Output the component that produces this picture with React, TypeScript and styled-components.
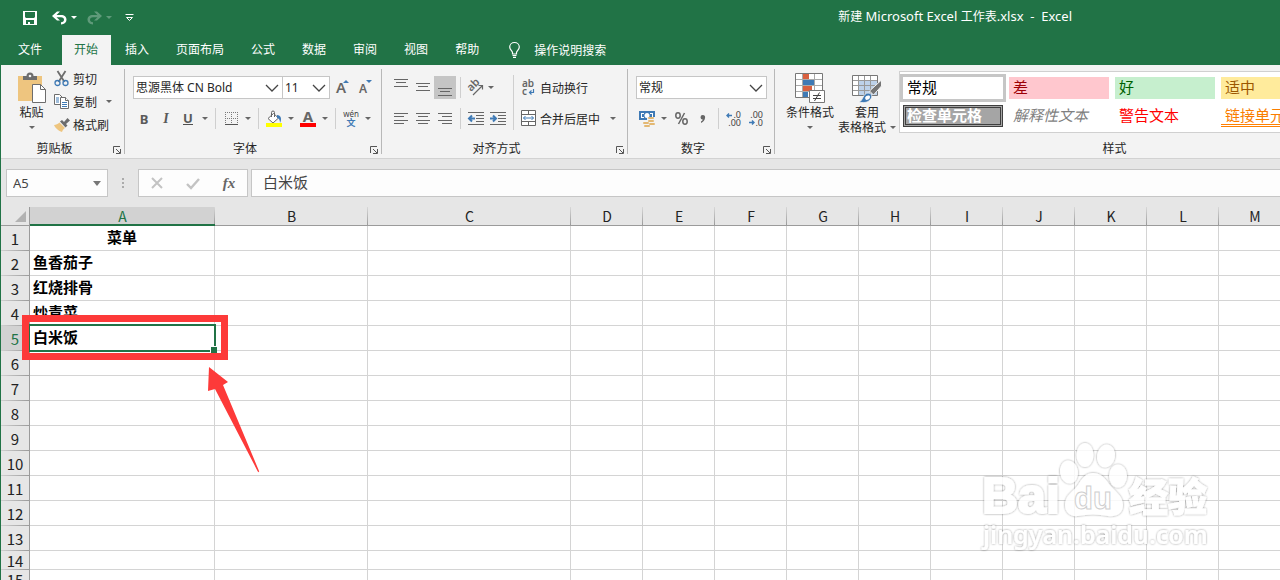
import React from "react";
import styled, { createGlobalStyle, css } from "styled-components";

const green = "#217346";
const line = "#c6c6c6";
const ink = "#666666";
const blue = "#3f7ab5";
const marker = "#fd3a39";

const GlobalStyle = createGlobalStyle`
  * { box-sizing: border-box; }
  body { margin: 0; overflow: hidden; }
  body, button, input, select {
    font-family: "Noto Sans", "Noto Sans CJK SC", sans-serif;
    font-size: 12px;
    color: #262626;
  }
  button { border: 0; padding: 0; background: none; cursor: pointer; }
  svg { display: block; flex: none; overflow: visible; }
`;

const Window = styled.div`
  height: 100vh;
  display: flex;
  flex-direction: column;
  overflow: hidden;
  border-left: 1px solid ${green};
  background: #fff;
`;

/* ---------- title bar and tabs ---------- */

const TitleBar = styled.header`
  flex: none;
  display: flex;
  align-items: center;
  height: 35px;
  padding: 0 208px 0 22px;
  background: ${green};
  color: #fff;
`;

const QuickAccess = styled.div`
  display: flex;
  align-items: center;
`;

const QuickButton = styled.button<{ $dim?: boolean; $gap?: number }>`
  display: flex;
  align-items: center;
  gap: 4px;
  margin-right: ${(p) => p.$gap ?? 0}px;
  color: #fff;
  opacity: ${(p) => (p.$dim ? 0.28 : 1)};
`;

const Title = styled.h1`
  margin: 0 0 0 auto;
  padding-bottom: 2px;
  font-size: 12px;
  line-height: 16px;
  font-weight: 400;
  white-space: pre;
`;

const Latin = styled.span`
  font-size: 13px;
`;

const TabBar = styled.nav`
  flex: none;
  display: flex;
  gap: 2px;
  height: 30px;
  padding-left: 5px;
  background: ${green};
`;

const Tab = styled.button<{ $active?: boolean; $file?: boolean }>`
  padding: 0 13px 3px 12px;
  margin-right: ${(p) => (p.$file ? 5 : 0)}px;
  white-space: nowrap;
  color: ${(p) => (p.$active ? green : "#fff")};
  background: ${(p) => (p.$active ? "#f3f3f3" : "transparent")};
`;

const TellMe = styled.button`
  display: flex;
  align-items: center;
  gap: 14px;
  margin-left: 15px;
  color: #fff;
  white-space: nowrap;
`;

/* ---------- ribbon ---------- */

const Ribbon = styled.div`
  flex: none;
  display: flex;
  padding: 4px 0;
  background: #f3f3f3;
  border-bottom: 1px solid #d2d2d2;
`;

const GroupBox = styled.section<{ $width: number; $last?: boolean }>`
  flex: ${(p) => (p.$last ? 1 : 0)} 0 ${(p) => p.$width}px;
  display: flex;
  flex-direction: column;
  border-right: ${(p) => (p.$last ? 0 : 1)}px solid #b8b8b8;
`;

const GroupBody = styled.div`
  display: flex;
  height: 73px;
  padding-left: 8px;
`;

const GroupFooter = styled.footer`
  display: flex;
  align-items: center;
  height: 12px;
  padding-right: 3px;
  line-height: 12px;
`;

const GroupLabel = styled.span`
  flex: 1;
  padding-top: 2px;
  text-align: center;
`;

const Launcher = styled.button`
  margin: 4px 0 0 5px;
`;

const Rows = styled.div`
  display: flex;
  flex-direction: column;
  gap: 8px;
  padding-top: 7px;
`;

const Row = styled.div`
  display: flex;
  align-items: center;
  height: 23px;
`;

const Tool = styled.button<{ $width?: number; $on?: boolean }>`
  display: flex;
  align-items: center;
  justify-content: center;
  width: ${(p) => p.$width ?? 22}px;
  height: 23px;
  background: ${(p) => (p.$on ? "#c5c5c5" : "transparent")};
`;

const Letter = styled.span<{ $kind: "bold" | "italic" | "underline" }>`
  font-size: 13px;
  line-height: 14px;
  font-weight: 700;
  color: #5a5a5a;
  ${(p) => p.$kind === "italic" && css`font-family: "Liberation Serif", serif; font-style: italic; font-size: 14px;`}
  ${(p) => p.$kind === "underline" && css`border-bottom: 1px solid #505050; line-height: 12px;`}
`;

const Divider = styled.span<{ $tall?: boolean }>`
  flex: none;
  width: 1px;
  height: ${(p) => (p.$tall ? 55 : 21)}px;
  margin: ${(p) => (p.$tall ? "6px 6px 0 4px" : "0 4px")};
  background: #cfcfcf;
`;

const LabelTool = styled.button<{ $gap?: number }>`
  display: flex;
  align-items: center;
  gap: ${(p) => p.$gap ?? 4}px;
  height: 23px;
  white-space: nowrap;
`;

const SmallStack = styled.div`
  display: flex;
  flex-direction: column;
`;

const SmallRow = styled.div`
  display: flex;
  align-items: center;
  height: 23px;
  padding-bottom: 4px;
`;

const BigTool = styled.button<{ $width: number }>`
  display: flex;
  flex-direction: column;
  align-items: center;
  align-self: flex-start;
  width: ${(p) => p.$width}px;
  padding-top: 4px;
  line-height: 15px;
  white-space: nowrap;
`;

const BigIcon = styled.span`
  display: block;
  height: 32px;
`;

const BigLine = styled.span`
  display: flex;
  align-items: center;
  gap: 4px;
  height: 15px;
`;

const Field = styled.label<{ $width: number; $joined?: boolean }>`
  position: relative;
  width: ${(p) => p.$width}px;
  margin-left: ${(p) => (p.$joined ? -1 : 0)}px;

  select {
    display: block;
    width: 100%;
    height: 23px;
    padding: 0 20px 0 2px;
    border: 1px solid ${line};
    border-radius: 0;
    background: #fff;
    appearance: none;
    font-size: 12px;
  }

  svg {
    position: absolute;
    right: 4px;
    top: 8px;
    pointer-events: none;
  }
`;

const Gallery = styled.div`
  flex: 1;
  align-self: flex-start;
  display: grid;
  grid-template-columns: repeat(5, 100px);
  gap: 6px;
  height: 62px;
  margin: 2px 0 0 2px;
  padding: 5px 3px;
  background: #fff;
  border: 1px solid #d0d0d0;
`;

type Swatch = "normal" | "bad" | "good" | "neutral" | "check" | "note" | "warn" | "link";

const swatches: Record<Swatch, ReturnType<typeof css>> = {
  normal: css`color: #000; background: #fff; outline: 3px solid ${line};`,
  bad: css`color: #9c0006; background: #ffc7ce;`,
  good: css`color: #006100; background: #c6efce;`,
  neutral: css`color: #9c5700; background: #ffeb9c;`,
  check: css`color: #fff; background: #a5a5a5; font-weight: 700; border: 3px double #3f3f3f; padding-left: 1px;`,
  note: css`color: #7f7f7f; font-style: italic;`,
  warn: css`color: #ff0000;`,
  link: css`color: #fa7d00; border-bottom: 3px double #ff8001; padding-bottom: 0;`,
};

const StyleCell = styled.button<{ $look: Swatch }>`
  display: flex;
  align-items: center;
  height: 22px;
  padding: 0 0 2px 4px;
  overflow: hidden;
  text-align: left;
  font-size: 15px;
  line-height: 18px;
  white-space: nowrap;
  ${(p) => swatches[p.$look]}
`;

/* ---------- formula bar ---------- */

const FormulaBar = styled.div`
  flex: none;
  display: flex;
  align-items: center;
  height: 48px;
  padding-left: 5px;
  background: #e6e6e6;
`;

const NameBox = styled.label`
  display: flex;
  align-items: center;
  width: 102px;
  height: 28px;
  padding: 0 6px;
  background: #fdfdfd;
  border: 1px solid ${line};

  input {
    flex: 1;
    min-width: 0;
    padding: 0;
    border: 0;
    background: none;
    font-size: 13px;
    color: #444;
  }
`;

const Grip = styled.span`
  display: flex;
  flex-direction: column;
  gap: 2px;
  margin: 0 14px;

  i { width: 2px; height: 2px; background: #ababab; }
`;

const EntryButtons = styled.div`
  display: flex;
  width: 110px;
  height: 28px;
  background: #fdfdfd;
  border: 1px solid ${line};
`;

const EntryButton = styled.button`
  flex: 1;
  display: flex;
  align-items: center;
  justify-content: center;
  font: italic 700 15px "Liberation Serif", serif;
  color: ${ink};
`;

const FormulaInput = styled.input`
  flex: 1;
  min-width: 0;
  height: 28px;
  margin-left: 3px;
  padding: 0 11px 4px;
  border: 1px solid ${line};
  border-right: 0;
  background: #fdfdfd;
  font-size: 15px;
  color: #444;
`;

/* ---------- sheet ---------- */

const Sheet = styled.main`
  position: relative;
  flex: 1;
  min-height: 0;
  overflow: hidden;
`;

const Grid = styled.table`
  table-layout: fixed;
  width: 1290px;
  border-spacing: 0;
  font-size: 15px;
  line-height: 16px;
  font-family: "Noto Sans CJK SC", sans-serif;
`;

const Corner = styled.th`
  height: 19px;
  padding: 0 3px 3px 14px;
  background: #e6e6e6;
  border-right: 1px solid #9b9b9b;
  border-bottom: 1px solid #9b9b9b;
  vertical-align: bottom;
`;

const ColumnHead = styled.th<{ $on?: boolean }>`
  height: 19px;
  padding: ${(p) => (p.$on ? 2 : 1)}px 0 0;
  font-size: 14px;
  line-height: 15px;
  font-weight: 400;
  color: ${(p) => (p.$on ? green : "#222")};
  background: linear-gradient(#d8d8d8, #9b9b9b) right / 1px 100% no-repeat ${(p) => (p.$on ? "#d2d2d2" : "#e6e6e6")};
  border-bottom: ${(p) => (p.$on ? `2px solid ${green}` : "1px solid #9b9b9b")};
`;

const RowHead = styled.th<{ $on?: boolean }>`
  padding: 0;
  font-weight: 400;
  color: ${(p) => (p.$on ? green : "#222")};
  background: linear-gradient(90deg, #d0d0d0, #9b9b9b) bottom / 100% 1px no-repeat ${(p) => (p.$on ? "#d2d2d2" : "#e6e6e6")};
  border-right: 1px solid #9b9b9b;
`;

const GridRow = styled.tr<{ $short?: boolean }>`
  height: ${(p) => (p.$short ? 19 : 25)}px;
`;

const Cell = styled.td<{ $center?: boolean }>`
  position: relative;
  padding: 0 3px 2px;
  font-weight: 700;
  color: #000;
  text-align: ${(p) => (p.$center ? "center" : "left")};
  border-right: 1px solid #d4d4d4;
  border-bottom: 1px solid #d4d4d4;
`;

const Selection = styled.span`
  position: absolute;
  z-index: 1;
  inset: -2px -2px -2px -1px;
  border: 2px solid ${green};
  border-left-width: 1px;

  &::after {
    content: "";
    position: absolute;
    right: -3px;
    bottom: -3px;
    width: 6px;
    height: 6px;
    background: ${green};
    border: solid #fff;
    border-width: 1px 0 0 1px;
  }
`;

const Callout = styled.div`
  position: absolute;
  z-index: 2;
  left: 21px;
  top: 108px;
  width: 206px;
  height: 45px;
  border: 7px solid ${marker};
`;

const Arrow = styled.svg`
  position: absolute;
  left: 206px;
  top: 159px;
`;

const Watermark = styled.svg`
  position: absolute;
  right: 60px;
  top: 230px;
`;

/* ---------- drawings ---------- */

const Caret = ({ color = ink }: { color?: string }) => (
  <svg width="6" height="3" viewBox="0 0 6 3"><path d="M0 0h6L3 3z" fill={color} /></svg>
);

const Chevron = () => (
  <svg width="14" height="8" viewBox="0 0 14 8"><path d="M1 1l6 6 6-6" fill="none" stroke="#444" strokeWidth="1.3" /></svg>
);

const DropArrow = ({ name }: { name: string }) => (
  <Tool $width={12} aria-label={name}><Caret /></Tool>
);

const SaveIcon = () => (
  <svg width="14" height="14" viewBox="0 0 14 14"><path fillRule="evenodd" fill="#fff" d="M0 0h14v14H0zM2 1v5l1 1h8l1-1V1zM3 9v4h2v-2h2v2h4V9z" /></svg>
);

const UndoIcon = ({ flip }: { flip?: boolean }) => (
  <svg width="15" height="14" viewBox="0 0 15 14">
    <g transform={flip ? "matrix(-1 0 0 1 15 0)" : undefined}>
      <path d="M0 5L5 .5h3L4.500 4H9c3.500 0 5.500 2 5.500 4.700S12.500 13 9 13.500v-2.200c2-.3 3-1.200 3-2.600S11 6.200 9 6.200H4.500L8 9.500H5z" fill="#fff" />
    </g>
  </svg>
);

const CustomizeIcon = () => (
  <svg width="9" height="8" viewBox="0 0 9 8"><path d="M.5 .5h8M1.500 3.500h6L4.500 6.500z" fill="none" stroke="#fff" /></svg>
);

const BulbIcon = () => (
  <svg width="11" height="16" viewBox="0 0 11 16"><path d="M3.500 12V10.500C3.500 9 .7 7.800 .7 5a4.800 4.500 0 0 1 9.600 0c0 2.800-2.800 4-2.800 5.500V12zM3.500 13.500h4M4 15.300h3" fill="none" stroke="#fff" strokeWidth="1.200" /></svg>
);

const PasteIcon = () => (
  <svg width="28" height="30" viewBox="0 0 28 30">
    <path d="M0 3h24v25H0z" fill="#eec57f" />
    <path d="M5 7V3h3.500a3.500 3.500 0 0 1 7 0H19v4z" fill="#6d6d6d" />
    <circle cx="12" cy="3" r="1.300" fill="#f3f3f3" />
    <path d="M14.500 11.500h8l5 5v13h-13z" fill="#fff" stroke="#6d6d6d" />
    <path d="M22.500 11.500v5h5" fill="none" stroke="#6d6d6d" />
  </svg>
);

const CutIcon = () => (
  <svg width="16" height="16" viewBox="0 0 16 16" fill="none">
    <path d="M3.500 0L10.500 11M11.500 0L4.500 11" stroke="#6d6d6d" strokeWidth="1.800" />
    <circle cx="3.500" cy="12" r="2.500" stroke={blue} strokeWidth="1.300" />
    <circle cx="11.500" cy="12" r="2.500" stroke={blue} strokeWidth="1.300" />
  </svg>
);

const CopyIcon = () => (
  <svg width="16" height="15" viewBox="0 0 16 15" fill="#fff">
    <path d="M.5 .5h5l3 3v7h-8z" stroke="#6d6d6d" />
    <path d="M2 4h3M2 6h3M2 8h3" stroke={blue} />
    <path d="M6.500 3.500h5l3 3v8h-8z" stroke="#6d6d6d" />
    <path d="M11.500 3.500v3h3" stroke="#6d6d6d" />
    <path d="M8 8.500h5M8 10.500h5M8 12.500h5" stroke={blue} />
  </svg>
);

const BrushIcon = () => (
  <svg width="16" height="14" viewBox="0 0 16 14">
    <path d="M0 7c2 0 4-1 5.500-2.500l5.500 5.500c-1.500 1-2.500 2-3 4C5 13 1 10 0 7z" fill="#eec57f" />
    <path d="M6 3.500L8 2l2 2 3.500-4L16 2.500 12 6l1.500 1.500-2 2z" fill="#6d6d6d" />
  </svg>
);

const GrowFont = ({ down }: { down?: boolean }) => (
  <svg width="14" height="16" viewBox="0 0 14 16">
    <text x="1" y="13" fontFamily="Noto Sans" fontWeight="600" fontSize={down ? 12 : 15} fill={ink}>A</text>
    <path d={down ? "M8 0h6l-3 3z" : "M8 3h6l-3-3z"} fill={blue} />
  </svg>
);

const BordersIcon = () => (
  <svg width="13" height="13" viewBox="0 0 13 13" fill="none" stroke="#7a7a7a">
    <path d="M0 .5h13M0 6.500h13M.5 0v13M6.500 0v13M12.500 0v13" strokeDasharray="1 1" />
    <path d="M0 12.500h13" stroke="#555" />
  </svg>
);

const FillIcon = () => (
  <svg width="16" height="16" viewBox="0 0 16 16">
    <path d="M7.500 2.500L12.500 7 7 12 2 7.500z" fill="#fff" stroke={ink} />
    <path d="M5.500 6V1.500a1.500 1.500 0 0 1 3 0V6" fill="none" stroke={ink} />
    <path d="M11 4c4 0 5 4 3 8 0-3-1-5-3-5z" fill={blue} />
    <path d="M0 12h16v4H0z" fill="#ffff00" />
  </svg>
);

const FontColorIcon = () => (
  <svg width="16" height="16" viewBox="0 0 16 16">
    <text x="8" y="11" textAnchor="middle" fontFamily="Noto Sans" fontWeight="700" fontSize="15" fill={ink}>A</text>
    <path d="M0 12h16v4H0z" fill="#ff0000" />
  </svg>
);

const PhoneticIcon = () => (
  <svg width="16" height="18" viewBox="0 0 16 18">
    <text x="8" y="7" textAnchor="middle" fontFamily="Noto Sans" fontSize="8" fill="#444">wén</text>
    <text x="8" y="16" textAnchor="middle" fontFamily="Noto Sans CJK SC" fontWeight="700" fontSize="9" fill={blue}>文</text>
  </svg>
);

const LinesIcon = ({ rows, shift = 0 }: { rows: [number, number][]; shift?: number }) => (
  <svg width="14" height="19" viewBox="0 0 14 19" shapeRendering="crispEdges">
    {rows.map(([x, w], i) => <rect key={i} x={x} y={shift + Math.round(i * 3.4)} width={w} height="1" fill={ink} />)}
  </svg>
);

const OrientationIcon = () => (
  <svg width="17" height="16" viewBox="0 0 17 16">
    <text x="4" y="12" transform="rotate(-45 4 12)" fontFamily="Noto Sans" fontWeight="600" fontSize="11" fill={ink}>ab</text>
    <path d="M6 15L15 6M11.500 5.500H15.500V9.500" fill="none" stroke={ink} strokeWidth="1.200" />
  </svg>
);

const IndentIcon = ({ out }: { out?: boolean }) => (
  <svg width="16" height="13" viewBox="0 0 16 13">
    <path d="M0 .5h16M8 3.500h8M8 6.500h8M8 9.500h8M0 12.500h16" stroke={ink} />
    <path d={out ? "M7 6.500H2M4 3.500l-3 3 3 3" : "M0 6.500h5M3 3.500l3 3-3 3"} fill="none" stroke={blue} strokeWidth="2" />
  </svg>
);

const WrapIcon = () => (
  <svg width="16" height="17" viewBox="0 0 16 17">
    <text x="2" y="8" fontFamily="Noto Sans" fontWeight="600" fontSize="10" fill={ink}>ab</text>
    <text x="2" y="16" fontFamily="Noto Sans" fontWeight="600" fontSize="10" fill={ink}>c</text>
    <path d="M13.500 10v3.500H9.500M11.500 11.500l-2 2 2 2" fill="none" stroke={blue} strokeWidth="1.200" />
  </svg>
);

const MergeIcon = () => (
  <svg width="16" height="17" viewBox="0 0 16 17" fill="none" stroke={ink}>
    <path d="M1.500 .5h14v15h-14z" fill="#fff" />
    <path d="M1.500 4.500h14M1.500 11.500h14M8.500 .5v4M8.500 11.500v4" />
    <path d="M3.500 8h10M5.500 6l-2 2 2 2M11.500 6l2 2-2 2" stroke={blue} />
  </svg>
);

const MoneyIcon = () => (
  <svg width="16" height="16" viewBox="0 0 16 16">
    <path d="M0 0h16v9H0z" fill={blue} />
    <path d="M2 2h3v1H3v3h2v1H2zM14 2h-3v1h2v3h-2v1h3z" fill="#fff" />
    <circle cx="8" cy="4.500" r="2.500" fill="#fff" />
    <path d="M8 6h8v10H4v-5h4z" fill="#f3f3f3" />
    <g fill="#e3b873">
      <rect x="9" y="6" width="6" height="2" rx="1" /><rect x="9" y="9" width="6" height="2" rx="1" />
      <rect x="10" y="12" width="6" height="2" rx="1" /><rect x="4" y="11" width="6" height="2" rx="1" />
      <rect x="5" y="14" width="6" height="2" rx="1" />
    </g>
  </svg>
);

const PercentIcon = () => (
  <svg width="13" height="13" viewBox="0 0 13 13" fill="none" stroke={ink} strokeWidth="1.500">
    <ellipse cx="3" cy="3.500" rx="2.200" ry="2.700" /><ellipse cx="10" cy="9.500" rx="2.200" ry="2.700" />
    <path d="M9.500 1l-6 11" />
  </svg>
);

const CommaIcon = () => (
  <svg width="6" height="8" viewBox="0 0 6 8"><path d="M2.800 0a2.300 2.300 0 0 1 2.300 2.500C5 5 3.500 7 1 8V6.500C2 6 2.600 5.400 2.700 4.500A2.200 2.200 0 0 1 2.800 0z" fill={ink} /></svg>
);

const DecimalIcon = ({ less }: { less?: boolean }) => (
  <svg width="16" height="16" viewBox="0 0 16 16" fontFamily="Noto Sans" fontSize="9" fill="#444">
    <text x="15" y="7" textAnchor="end">{less ? ".00" : ".0"}</text>
    <text x="15" y="15" textAnchor="end">{less ? ".0" : ".00"}</text>
    <path d={less ? "M1 11.500h5M4 9.500l2 2-2 2" : "M1 4.500h5M3 2.500l-2 2 2 2"} fill="none" stroke={blue} strokeWidth="1.400" />
  </svg>
);

const LauncherIcon = () => (
  <svg width="8" height="8" viewBox="0 0 8 8" fill="none" stroke="#555">
    <path d="M.5 7V.5H7M3 3l4 4M7.500 3v4.500H3" />
  </svg>
);

const ConditionalIcon = () => (
  <svg width="30" height="30" viewBox="0 0 30 30">
    <path d="M.5 .5h27v24H.5z" fill="#fff" stroke="#777" />
    <path d="M1 6.500h26M1 12.500h26M1 18.500h26M7.500 1v23M19.500 1v23" stroke="#aaa" />
    <path d="M8 1h6v5H8zM8 13h9v5H8z" fill="#d9603f" />
    <path d="M8 7h11v5H8zM8 19h5v5H8z" fill={blue} />
    <path d="M14.500 17.500h15v12h-15z" fill="#fff" stroke="#777" />
    <path d="M18 22.500h8M18 25.500h8M24.500 19.500l-5 8.500" stroke="#444" />
  </svg>
);

const TableFormatIcon = () => (
  <svg width="30" height="30" viewBox="0 0 30 30">
    <path d="M.5 2.500h25v20H.5z" fill="#fff" stroke="#777" />
    <path d="M7 8h18v14H7z" fill="#bdd2ea" />
    <path d="M1 7.500h24M1 12.500h24M1 17.500h24M6.500 3v19M12.500 3v19M18.500 3v19" stroke="#999" />
    <path d="M29.500 7v6l-8 9-4-4z" fill="#757575" stroke="#f3f3f3" />
    <path d="M7 29c4-1 4-9 9-9 4 0 5 4 2 7s-7 3-11 2z" fill={blue} stroke="#f3f3f3" strokeWidth=".8" />
    <path d="M13 25c1-3 5-3 5-1s-2 3-4 3z" fill="#fff" />
  </svg>
);

/* ---------- data ---------- */

const tabs = ["文件", "开始", "插入", "页面布局", "公式", "数据", "审阅", "视图", "帮助"];
const styleCells: [string, Swatch][] = [
  ["常规", "normal"], ["差", "bad"], ["好", "good"], ["适中", "neutral"],
  ["检查单元格", "check"], ["解释性文本", "note"], ["警告文本", "warn"], ["链接单元格", "link"],
];
const columns: [string, number][] = [
  ["A", 185], ["B", 153], ["C", 203], ["D", 72], ["E", 72], ["F", 72], ["G", 72],
  ["H", 72], ["I", 72], ["J", 72], ["K", 72], ["L", 72], ["M", 72],
];
const menu = ["菜单", "鱼香茄子", "红烧排骨", "炒青菜", "白米饭"];
const rowCount = 15;
const activeRow = 5;

const Group = ({ label, width, last, children }: { label: string; width: number; last?: boolean; children: React.ReactNode }) => (
  <GroupBox $width={width} $last={last} aria-label={label}>
    <GroupBody>{children}</GroupBody>
    <GroupFooter>
      <GroupLabel>{label}</GroupLabel>
      {!last && <Launcher aria-label={`${label}设置`}><LauncherIcon /></Launcher>}
    </GroupFooter>
  </GroupBox>
);

const Combo = ({ name, value, width, joined }: { name: string; value: string; width: number; joined?: boolean }) => (
  <Field $width={width} $joined={joined}>
    <select aria-label={name} defaultValue={value}><option>{value}</option></select>
    <Chevron />
  </Field>
);

const SheetGrid = () => (
  <Grid>
    <colgroup>
      <col style={{ width: 29 }} />
      {columns.map(([name, width]) => <col key={name} style={{ width }} />)}
    </colgroup>
    <thead>
      <tr>
        <Corner aria-label="全选"><svg width="11" height="11" viewBox="0 0 11 11"><path d="M11 0v11H0z" fill="#b2b2b2" /></svg></Corner>
        {columns.map(([name]) => <ColumnHead key={name} scope="col" $on={name === "A"}>{name}</ColumnHead>)}
      </tr>
    </thead>
    <tbody>
      {Array.from({ length: rowCount }, (_, i) => i + 1).map((n) => (
        <GridRow key={n} $short={n > 13}>
          <RowHead scope="row" $on={n === activeRow}>{n}</RowHead>
          {columns.map(([name], c) => (
            <Cell key={name} $center={n === 1}>
              {c === 0 && menu[n - 1]}
              {c === 0 && n === activeRow && <Selection />}
            </Cell>
          ))}
        </GridRow>
      ))}
    </tbody>
  </Grid>
);

const BaiduMark = () => (
  <Watermark width="240" height="120" viewBox="0 0 240 120" aria-label="Baidu 经验">
    <defs>
      <filter id="halo" x="-10%" y="-10%" width="120%" height="120%">
        <feDropShadow dx="0" dy="0" stdDeviation="1" floodColor="#000" floodOpacity="0.5" />
      </filter>
    </defs>
    <g filter="url(#halo)" fill="#fff" opacity="0.85">
      <text x="2" y="76" fontFamily="Liberation Sans" fontWeight="700" fontSize="50" stroke="#fff" strokeWidth="2">Bai</text>
      <ellipse cx="89" cy="35" rx="9" ry="11.500" transform="rotate(-8 89 35)" />
      <ellipse cx="105" cy="18" rx="8.500" ry="12" />
      <ellipse cx="126" cy="19" rx="9" ry="11.500" transform="rotate(10 126 19)" />
      <ellipse cx="138" cy="39" rx="9" ry="11.500" />
      <path d="M113 36c8 0 12 5 16 11 5 7 14 11 14 21 0 9-7 12-15 11-10-2-20-2-30 0-8 1-13-4-13-11 0-10 8-13 13-20 4-7 8-12 15-12z" />
      <text x="149" y="74" fontFamily="Noto Sans CJK SC" fontWeight="900" fontSize="39" stroke="#fff" strokeWidth="1">经验</text>
      <text x="3" y="107" fontFamily="Noto Sans" fontWeight="600" fontSize="25">jingyan.baidu.com</text>
    </g>
    <text x="94" y="72" fontFamily="Liberation Sans" fontWeight="700" fontSize="31" fill="#fff" stroke="#cfcfcf">du</text>
  </Watermark>
);

export default function App() {
  return (
    <Window>
      <GlobalStyle />
      <TitleBar>
        <QuickAccess>
          <QuickButton aria-label="保存" $gap={15}><SaveIcon /></QuickButton>
          <QuickButton aria-label="撤消" $gap={10}><UndoIcon /><Caret color="#fff" /></QuickButton>
          <QuickButton aria-label="恢复" $gap={13} $dim><UndoIcon flip /><Caret color="#fff" /></QuickButton>
          <QuickButton aria-label="自定义快速访问工具栏"><CustomizeIcon /></QuickButton>
        </QuickAccess>
        <Title>新建<Latin>{" Microsoft Excel "}</Latin>工作表<Latin>{".xlsx  -  Excel"}</Latin></Title>
      </TitleBar>
      <TabBar>
        {tabs.map((t, i) => <Tab key={t} $file={i === 0} $active={i === 1}>{t}</Tab>)}
        <TellMe><BulbIcon />操作说明搜索</TellMe>
      </TabBar>

      <Ribbon>
        <Group label="剪贴板" width={124}>
          <BigTool $width={45}>
            <BigIcon><PasteIcon /></BigIcon>
            <BigLine>粘贴</BigLine>
            <BigLine><Caret /></BigLine>
          </BigTool>
          <SmallStack>
            <SmallRow><LabelTool $gap={3}><CutIcon />剪切</LabelTool></SmallRow>
            <SmallRow><LabelTool $gap={3}><CopyIcon />复制</LabelTool><Tool $width={24} aria-label="复制选项"><Caret /></Tool></SmallRow>
            <SmallRow><LabelTool $gap={3}><BrushIcon />格式刷</LabelTool></SmallRow>
          </SmallStack>
        </Group>

        <Group label="字体" width={257}>
          <Rows>
            <Row>
              <Combo name="字体" value="思源黑体 CN Bold" width={150} />
              <Combo name="字号" value="11" width={48} joined />
              <Tool $width={24} aria-label="增大字号"><GrowFont /></Tool>
              <Tool aria-label="减小字号"><GrowFont down /></Tool>
            </Row>
            <Row>
              <Tool><Letter $kind="bold">B</Letter></Tool>
              <Tool><Letter $kind="italic">I</Letter></Tool>
              <Tool><Letter $kind="underline">U</Letter></Tool>
              <DropArrow name="下划线选项" />
              <Divider />
              <Tool aria-label="边框"><BordersIcon /></Tool>
              <DropArrow name="边框选项" />
              <Divider />
              <Tool aria-label="填充颜色"><FillIcon /></Tool>
              <DropArrow name="填充选项" />
              <Tool aria-label="字体颜色"><FontColorIcon /></Tool>
              <DropArrow name="颜色选项" />
              <Divider />
              <Tool aria-label="拼音指南"><PhoneticIcon /></Tool>
              <DropArrow name="拼音选项" />
            </Row>
          </Rows>
        </Group>

        <Group label="对齐方式" width={246}>
          <Rows>
            <Row>
              <Tool aria-label="顶端对齐"><LinesIcon rows={[[0, 14], [2, 10], [0, 14]]} shift={1} /></Tool>
              <Tool aria-label="垂直居中"><LinesIcon rows={[[0, 14], [2, 10], [0, 14]]} shift={5} /></Tool>
              <Tool aria-label="底端对齐" $on><LinesIcon rows={[[0, 14], [2, 10], [0, 14]]} shift={10} /></Tool>
              <Divider />
              <Tool $width={20} aria-label="方向"><OrientationIcon /></Tool>
              <DropArrow name="方向选项" />
            </Row>
            <Row>
              <Tool aria-label="左对齐"><LinesIcon rows={[[0, 14], [0, 10], [0, 14], [0, 10]]} shift={4} /></Tool>
              <Tool aria-label="居中"><LinesIcon rows={[[0, 14], [2, 10], [0, 14], [2, 10]]} shift={4} /></Tool>
              <Tool aria-label="右对齐"><LinesIcon rows={[[0, 14], [4, 10], [0, 14], [4, 10]]} shift={4} /></Tool>
              <Divider />
              <Tool aria-label="减少缩进量"><IndentIcon out /></Tool>
              <Tool aria-label="增加缩进量"><IndentIcon /></Tool>
            </Row>
          </Rows>
          <Divider $tall />
          <Rows>
            <Row><LabelTool><WrapIcon />自动换行</LabelTool></Row>
            <Row><LabelTool><MergeIcon />合并后居中</LabelTool><Tool $width={26} aria-label="合并选项"><Caret /></Tool></Row>
          </Rows>
        </Group>

        <Group label="数字" width={147}>
          <Rows>
            <Row><Combo name="数字格式" value="常规" width={131} /></Row>
            <Row>
              <Tool aria-label="会计数字格式"><MoneyIcon /></Tool>
              <DropArrow name="货币选项" />
              <Tool aria-label="百分比样式"><PercentIcon /></Tool>
              <Tool aria-label="千位分隔样式"><CommaIcon /></Tool>
              <Divider />
              <Tool aria-label="增加小数位数"><DecimalIcon /></Tool>
              <Tool aria-label="减少小数位数"><DecimalIcon less /></Tool>
            </Row>
          </Rows>
        </Group>

        <Group label="样式" width={682} last>
          <BigTool $width={54}>
            <BigIcon><ConditionalIcon /></BigIcon>
            <BigLine>条件格式</BigLine>
            <BigLine><Caret /></BigLine>
          </BigTool>
          <BigTool $width={60}>
            <BigIcon><TableFormatIcon /></BigIcon>
            <BigLine>套用</BigLine>
            <BigLine>表格格式<Caret /></BigLine>
          </BigTool>
          <Gallery>
            {styleCells.slice(0, 4).map(([t, look]) => <StyleCell key={t} $look={look}>{t}</StyleCell>)}
            <span />
            {styleCells.slice(4).map(([t, look]) => <StyleCell key={t} $look={look}>{t}</StyleCell>)}
          </Gallery>
        </Group>
      </Ribbon>

      <FormulaBar>
        <NameBox>
          <input aria-label="名称框" defaultValue="A5" />
          <svg width="8" height="5" viewBox="0 0 8 5"><path d="M0 0h8L4 5z" fill="#777" /></svg>
        </NameBox>
        <Grip><i /><i /><i /></Grip>
        <EntryButtons>
          <EntryButton aria-label="取消"><svg width="12" height="12" viewBox="0 0 12 12"><path d="M1 1l10 10M11 1L1 11" stroke="#c3c3c3" strokeWidth="2" /></svg></EntryButton>
          <EntryButton aria-label="输入"><svg width="14" height="11" viewBox="0 0 14 11"><path d="M1 6l4 4 8-9" fill="none" stroke="#c3c3c3" strokeWidth="2.400" /></svg></EntryButton>
          <EntryButton>fx</EntryButton>
        </EntryButtons>
        <FormulaInput aria-label="编辑栏" defaultValue="白米饭" />
      </FormulaBar>

      <Sheet>
        <SheetGrid />
        <Callout />
        <Arrow width="54" height="108" viewBox="0 0 54 108">
          <path d="M2 1L21 16l-5 3 36 86c.5 1-.5 2-1.500 0L8 23l-7 2z" fill={marker} />
        </Arrow>
        <BaiduMark />
      </Sheet>
    </Window>
  );
}
